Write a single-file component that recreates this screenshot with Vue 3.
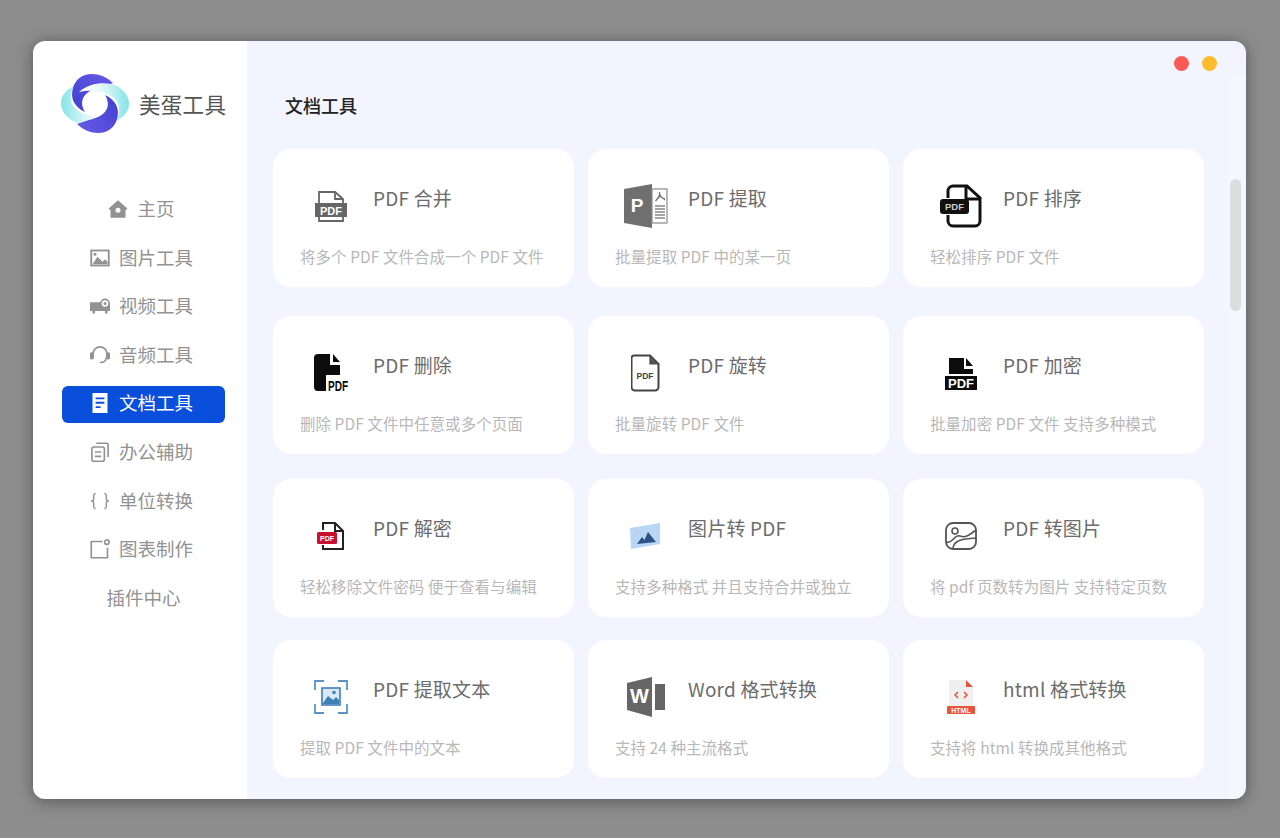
<template>
  <div class="window">

    <!-- SIDEBAR -->
    <div class="sidebar">
      <div class="logo">
        <svg width="68" height="60" viewBox="0 0 68 60">
          <defs>
            <linearGradient id="cyanL" x1="0" y1="0" x2="1" y2="0">
              <stop offset="0" stop-color="#84e4e8" />
              <stop offset="0.45" stop-color="#d4f4f6" />
              <stop offset="0.85" stop-color="#ffffff" />
            </linearGradient>
            <linearGradient id="purpleT" x1="0" y1="1" x2="1" y2="0">
              <stop offset="0" stop-color="#3f3fd0" />
              <stop offset="1" stop-color="#6a5ae6" />
            </linearGradient>
          </defs>
          <g>
            <path d="M13 12C4 16 0 23 0 29C0 37 5 43 12 47C20 51 38 52 50 41C38 44 22 42 15 35C9 30 8 20 13 12Z" fill="url(#cyanL)" />
            <path d="M52 9C46 3 38 0 31 0C21 0 14 6 12 14C9 24 13 33 24 38C20 32 20 25 25 20C31 14 42 13 52 9Z" fill="url(#purpleT)" />
          </g>
          <g transform="rotate(180 34 29.500)">
            <path d="M13 12C4 16 0 23 0 29C0 37 5 43 12 47C20 51 38 52 50 41C38 44 22 42 15 35C9 30 8 20 13 12Z" fill="url(#cyanL)" />
            <path d="M52 9C46 3 38 0 31 0C21 0 14 6 12 14C9 24 13 33 24 38C20 32 20 25 25 20C31 14 42 13 52 9Z" fill="url(#purpleT)" />
          </g>
        </svg>
        <span class="logo-text">美蛋工具</span>
      </div>

      <div class="nav">
        <div v-for="item in navItems" :key="item.name" :class="['nav-item', item.name === active ? 'active' : '', item.icon ? 'has-icon' : '']">
          <svg v-if="item.icon" class="nav-icon" width="20" height="20" viewBox="1 1 16 16">
            <path v-if="item.icon === 'home'" d="M9 2L1.500 8.500L3 10V16H15V10L16.500 8.500ZM9 8A2 2 0 1 1 9 12A2 2 0 1 1 9 8Z" fill="currentColor" fill-rule="evenodd" />
            <g v-if="item.icon === 'image'">
              <rect x="2" y="3" width="14" height="12" fill="none" stroke="currentColor" stroke-width="1.500" />
              <path d="M3 14L7 8L11 12L13 10L15 12V14Z" fill="currentColor" />
              <circle cx="5" cy="6" r="1.200" fill="currentColor" />
            </g>
            <g v-if="item.icon === 'video'">
              <path d="M1 6H10A4.500 4.500 0 0 0 17 7V13H15V15H13V13H5V15H3V13H1Z" fill="currentColor" />
              <circle cx="13" cy="7" r="3.300" fill="#fff" stroke="currentColor" stroke-width="1.300" />
              <circle cx="13" cy="7" r="1.200" fill="currentColor" />
            </g>
            <g v-if="item.icon === 'audio'" fill="none" stroke="currentColor" stroke-width="1.300">
              <path d="M3.500 9V8A5.500 5.500 0 0 1 14.500 8V9" />
              <path d="M14 11C14 14 12 15 9 15" />
              <rect x="1.500" y="7.500" width="2" height="4.500" rx="1" fill="currentColor" />
              <rect x="14.500" y="7.500" width="2" height="4.500" rx="1" fill="currentColor" />
            </g>
            <path v-if="item.icon === 'doc'" d="M3 1H15V17H3ZM5.500 4.500V6H12.500V4.500ZM5.500 8V9.500H12.500V8ZM5.500 11.500V13H9.500V11.500Z" fill="currentColor" fill-rule="evenodd" />
            <g v-if="item.icon === 'office'" fill="none" stroke="currentColor" stroke-width="1.300">
              <rect x="2.500" y="5" width="10" height="11.500" rx="1.500" />
              <path d="M6 2H14.500A1 1 0 0 1 15.500 3V13" />
              <path d="M5 9H10M5 12.500H10" />
            </g>
            <g v-if="item.icon === 'code'" fill="none" stroke="currentColor" stroke-width="1.100">
              <path d="M5.500 3C3.500 3 4 5 4 7C4 8.500 3.500 9 2 9C3.500 9 4 9.500 4 11C4 13 3.500 15 5.500 15" />
              <path d="M12.500 3C14.500 3 14 5 14 7C14 8.500 14.500 9 16 9C14.500 9 14 9.500 14 11C14 13 14.500 15 12.500 15" />
            </g>
            <g v-if="item.icon === 'chart'" fill="none" stroke="currentColor" stroke-width="1.300">
              <path d="M11 3H2V16H15V8" />
              <circle cx="14.500" cy="3.500" r="1.800" />
            </g>
          </svg>
          <span>{{ item.name }}</span>
        </div>
      </div>
    </div>

    <!-- MAIN -->
    <div class="main">
      <div class="dots">
        <span class="dot red"></span>
        <span class="dot yellow"></span>
      </div>

      <div class="track"></div>
      <div class="thumb"></div>

      <h2 class="title">文档工具</h2>

      <div v-for="(row, i) in rows" :key="i" class="row">
        <div v-for="tool in row" :key="tool.name" class="card">
          <div class="card-head">
            <div class="card-icon">

              <svg v-if="tool.icon === 'merge'" width="36" height="36" viewBox="0 0 36 36">
                <path d="M6 16V4H22L30 11V16" fill="none" stroke="#666" stroke-width="1.800" />
                <path d="M22 4V11H30" fill="none" stroke="#666" stroke-width="1.800" />
                <rect x="2" y="15" width="32" height="14" fill="#666" />
                <path d="M6 29V33H30V29" fill="none" stroke="#666" stroke-width="1.800" />
                <text x="18" y="26.500" class="svg-txt" font-size="11" fill="#fff">PDF</text>
              </svg>

              <svg v-if="tool.icon === 'ppt'" width="44" height="44" viewBox="0 0 44 44">
                <path d="M0 5L28 0V44L0 39Z" fill="#6f6f6f" />
                <rect x="28" y="5" width="15" height="34" fill="#fff" stroke="#8a8a8a" stroke-width="1.200" />
                <path d="M32 16C35 14 36 10 35.500 8C35 11 38 15 41 15M31.500 17L36 12L41 16" fill="none" stroke="#777" stroke-width="1.300" />
                <path d="M31 22H41M31 25H41M31 28H41M31 31H41M31 34H41" stroke="#888" stroke-width="1.500" />
                <text x="13" y="28" class="svg-txt" font-size="19" fill="#fff">P</text>
              </svg>

              <svg v-if="tool.icon === 'sort'" width="42" height="44" viewBox="0 0 42 44">
                <path d="M8 14V7A5 5 0 0 1 13 2H27L40 14V37A5 5 0 0 1 35 42H13A5 5 0 0 1 8 37V31" fill="none" stroke="#111" stroke-width="3" />
                <path d="M26 2V15H40" fill="none" stroke="#111" stroke-width="3" />
                <rect x="0" y="15" width="29" height="15" rx="3" fill="#111" />
                <text x="14.500" y="26" class="svg-txt" font-size="9.500" fill="#ccc">PDF</text>
              </svg>

              <svg v-if="tool.icon === 'delete'" width="36" height="40" viewBox="0 0 36 40">
                <path d="M1 5A4 4 0 0 1 5 1H17V12H27V22H13V38H5A4 4 0 0 1 1 34Z" fill="#0c0c0c" />
                <path d="M20 1L27 9H20Z" fill="#0c0c0c" />
                <text transform="translate(25 38) scale(0.72 1)" class="svg-txt" font-size="14" fill="#0c0c0c">PDF</text>
              </svg>

              <svg v-if="tool.icon === 'rotate'" width="30" height="38" viewBox="1 0 30 38">
                <path d="M4 1.500H20L28.500 10V33A3.500 3.500 0 0 1 25 36.500H5A3.500 3.500 0 0 1 1.500 33V4A2.500 2.500 0 0 1 4 1.500Z" fill="none" stroke="#444" stroke-width="2" />
                <path d="M20 2V10H28" fill="#555" stroke="#444" stroke-width="1.200" />
                <text x="15" y="24.500" class="svg-txt" font-size="8.500" fill="#444">PDF</text>
              </svg>

              <svg v-if="tool.icon === 'lock'" width="34" height="36" viewBox="0 -2 34 36">
                <path d="M5 1H20V12H29V17H5Z" fill="#0c0c0c" />
                <path d="M22 1L29 9H22Z" fill="#0c0c0c" />
                <rect x="1" y="19" width="32" height="14" fill="#0c0c0c" />
                <text x="17" y="31" class="svg-txt" font-size="13" fill="#fff">PDF</text>
              </svg>

              <svg v-if="tool.icon === 'unlock'" width="30" height="30" viewBox="0 0 30 30">
                <path d="M7 9V2H19L27 10V28H7V24" fill="none" stroke="#222" stroke-width="2" />
                <path d="M19 2V10H27" fill="none" stroke="#222" stroke-width="2" />
                <rect x="1" y="11" width="20" height="12" rx="1.500" fill="#c8102e" />
                <text x="11" y="20" class="svg-txt" font-size="7" fill="#fff">PDF</text>
              </svg>

              <svg v-if="tool.icon === 'img2pdf'" width="32" height="28" viewBox="1 0 32 28">
                <path d="M1 6L31 1V22L2 27Z" fill="#b9d6f6" />
                <path d="M8 22L13 15L15.500 18L19 10L27 20Z" fill="#2d5286" />
                <circle cx="8" cy="9" r="1.200" fill="#eab9c0" />
              </svg>

              <svg v-if="tool.icon === 'pdf2img'" width="34" height="30" viewBox="0 0 34 30">
                <rect x="2" y="2" width="30" height="26" rx="7" fill="none" stroke="#555" stroke-width="1.800" />
                <circle cx="11" cy="10" r="3" fill="none" stroke="#555" stroke-width="1.600" />
                <path d="M2 21C8 24 10 13 16 15C21 17 24 15 32 9M9 27C10 20 16 18 32 17" fill="none" stroke="#555" stroke-width="1.600" />
              </svg>

              <svg v-if="tool.icon === 'ocr'" width="36" height="36" viewBox="0 0 36 36">
                <path d="M2 11V2H11M25 2H34V11M2 25V34H11M25 34H34V25" fill="none" stroke="#5b94c4" stroke-width="1.800" />
                <rect x="9" y="9" width="18" height="17" fill="#dbe9f6" stroke="#3e7fb8" stroke-width="1.600" />
                <path d="M10 24L15 17L20 21L23 18L26 21V25H10Z" fill="#3e7fb8" />
                <circle cx="21" cy="13.500" r="1.800" fill="#3e7fb8" />
              </svg>

              <svg v-if="tool.icon === 'word'" width="40" height="40" viewBox="0 0 40 40">
                <path d="M1 6L26 0V40L1 33Z" fill="#666" />
                <rect x="29" y="7" width="10" height="26" fill="#666" />
                <text x="13.500" y="26" class="svg-txt" font-size="20" fill="#fff">W</text>
              </svg>

              <svg v-if="tool.icon === 'html'" width="30" height="36" viewBox="0 0 30 36">
                <path d="M3 1H20L27 8V28H3Z" fill="#efefef" />
                <path d="M20 1L27 8H20Z" fill="#e8543c" />
                <path d="M12 13L9 16L12 19M18 13L21 16L18 19" fill="none" stroke="#e8543c" stroke-width="1.500" />
                <rect x="1" y="27" width="28" height="8" rx="1" fill="#e8543c" />
                <text x="15" y="33.500" class="svg-txt" font-size="7" fill="#fff">HTML</text>
              </svg>

            </div>
            <div class="card-title">{{ tool.name }}</div>
          </div>
          <div class="card-desc">{{ tool.desc }}</div>
        </div>
      </div>
    </div>

  </div>
</template>

<script setup>
const active = '文档工具'

/* NAV */
const navItems = [
  { name: '主页', icon: 'home' },
  { name: '图片工具', icon: 'image' },
  { name: '视频工具', icon: 'video' },
  { name: '音频工具', icon: 'audio' },
  { name: '文档工具', icon: 'doc' },
  { name: '办公辅助', icon: 'office' },
  { name: '单位转换', icon: 'code' },
  { name: '图表制作', icon: 'chart' },
  { name: '插件中心', icon: '' }
]

/* TOOLS */
const rows = [
  [
    { name: 'PDF 合并', desc: '将多个 PDF 文件合成一个 PDF 文件', icon: 'merge' },
    { name: 'PDF 提取', desc: '批量提取 PDF 中的某一页', icon: 'ppt' },
    { name: 'PDF 排序', desc: '轻松排序 PDF 文件', icon: 'sort' }
  ],
  [
    { name: 'PDF 删除', desc: '删除 PDF 文件中任意或多个页面', icon: 'delete' },
    { name: 'PDF 旋转', desc: '批量旋转 PDF 文件', icon: 'rotate' },
    { name: 'PDF 加密', desc: '批量加密 PDF 文件 支持多种模式', icon: 'lock' }
  ],
  [
    { name: 'PDF 解密', desc: '轻松移除文件密码 便于查看与编辑', icon: 'unlock' },
    { name: '图片转 PDF', desc: '支持多种格式 并且支持合并或独立', icon: 'img2pdf' },
    { name: 'PDF 转图片', desc: '将 pdf 页数转为图片 支持特定页数', icon: 'pdf2img' }
  ],
  [
    { name: 'PDF 提取文本', desc: '提取 PDF 文件中的文本', icon: 'ocr' },
    { name: 'Word 格式转换', desc: '支持 24 种主流格式', icon: 'word' },
    { name: 'html 格式转换', desc: '支持将 html 转换成其他格式', icon: 'html' }
  ]
]
</script>

<style>
html,
body {
  margin: 0;
  height: 100%;
  background: #8d8d8d;
  overflow: hidden;
}
</style>

<style scoped>
.window {
  display: flex;
  box-sizing: border-box;
  width: 1213px;
  height: 758px;
  margin: 41px 0 0 33px;
  border-radius: 12px;
  overflow: hidden;
  box-shadow: 0 2px 16px rgba(0, 0, 0, 0.4);
  font-family: "Noto Sans CJK SC", "Noto Sans", sans-serif;
}

/* SIDEBAR */
.sidebar {
  width: 214px;
  flex-shrink: 0;
  background: #fff;
  padding-top: 33px;
  box-sizing: border-box;
}

.logo {
  display: flex;
  align-items: center;
  padding-left: 28px;
  height: 60px;
}

.logo-text {
  margin: 0 0 2px 10px;
  font-size: 21.500px;
  letter-spacing: 0.3px;
  color: #555;
}

.nav {
  display: flex;
  flex-direction: column;
  gap: 11.6px;
  width: 163px;
  margin: 58px 0 0 29px;
}

.nav-item {
  display: flex;
  align-items: center;
  justify-content: center;
  height: 37px;
  padding-bottom: 5px;
  border-radius: 6px;
  font-size: 18.500px;
  color: #929292;
  box-sizing: border-box;
}

.has-icon {
  padding-right: 3px;
}

.nav-item.active {
  background: #0a4fdb;
  color: #fff;
}

.nav-icon {
  margin: 2px 9px 0 -1px;
}

/* MAIN */
.main {
  position: relative;
  flex: 1;
  background: #f2f5ff;
  padding-left: 26px;
  overflow: hidden;
}

.dots {
  position: absolute;
  top: 15px;
  right: 29px;
  display: flex;
  gap: 13px;
}

.dot {
  width: 15px;
  height: 15px;
  border-radius: 50%;
}

.red {
  background: #fd5a55;
}

.yellow {
  background: #fdbb2d;
}

.track {
  position: absolute;
  top: 34px;
  right: 0;
  bottom: 0;
  width: 18px;
  background: rgba(255, 255, 255, 0.25);
}

.thumb {
  position: absolute;
  top: 138px;
  right: 5px;
  width: 11px;
  height: 132px;
  border-radius: 6px;
  background: #dcdddf;
}

.title {
  margin: 52px 0 32px 12px;
  font-size: 18px;
  line-height: 24px;
  font-weight: 500;
  color: #222;
}

/* CARDS */
.row {
  display: flex;
  gap: 14px;
}

.row + .row {
  margin-top: 29px;
}

.row + .row + .row {
  margin-top: 25px;
}

.row + .row + .row + .row {
  margin-top: 23px;
}

.card {
  width: 301px;
  height: 138px;
  background: #fff;
  border-radius: 18px;
  padding: 33px 0 0 27px;
  box-sizing: border-box;
}

.card-head {
  display: flex;
  align-items: flex-start;
  height: 48px;
}

.card-icon {
  display: flex;
  align-items: center;
  justify-content: center;
  width: 62px;
  height: 48px;
  margin-right: 11px;
}

.card-title {
  margin-top: 4px;
  font-size: 19px;
  letter-spacing: 0.2px;
  line-height: 24px;
  color: #6c6c6c;
}

.card-desc {
  margin-top: 16px;
  font-size: 15.500px;
  letter-spacing: 0.05px;
  line-height: 20px;
  color: #b8b8b8;
  white-space: nowrap;
}

.svg-txt {
  font-family: "Liberation Sans", sans-serif;
  font-weight: 700;
  text-anchor: middle;
}
</style>
